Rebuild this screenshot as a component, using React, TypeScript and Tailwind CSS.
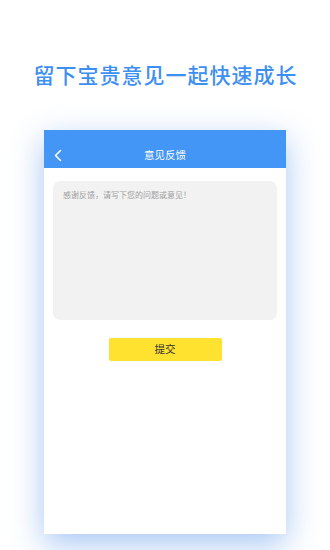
export default function App() {
  return (
    <div
      className="w-[330px] h-[550px] bg-white overflow-hidden flex flex-col items-center"
      style={{ fontFamily: '"Noto Sans CJK SC", "Noto Sans", sans-serif' }}
    >
      <div className="mt-[58px] h-[32px] flex items-center justify-center text-[21px] leading-none font-medium tracking-[1px] text-[#3d8ff2] pl-[1px]">
        留下宝贵意见一起快速成长
      </div>
      <div className="mt-[40px] w-[242px] h-[404px] bg-white flex flex-col shadow-[0_10px_30px_rgba(60,130,230,0.45)]">
        <div className="h-[38px] bg-[#4395f6] flex items-center relative pt-[12px]">
          <svg className="absolute left-[9px] top-[19px]" width="10" height="13" viewBox="0 0 10 13">
            <path d="M7.5 1.5 L2.5 6.5 L7.5 11.5" fill="none" stroke="white" strokeWidth="1.6" strokeLinecap="round" strokeLinejoin="round" />
          </svg>
          <div className="flex-1 text-center text-white text-[10.5px] leading-none">意见反馈</div>
        </div>
        <div className="mt-[13px] mx-[9px] h-[139px] rounded-[7px] bg-[#f2f2f2] px-[10px] pt-[10px]">
          <div className="text-[8px] leading-none text-[#9f9f9f]">感谢反馈，请写下您的问题或意见！</div>
        </div>
        <div className="mt-[18px] flex justify-center">
          <div className="w-[113px] h-[23px] rounded-[2px] bg-[#ffe22f] flex items-center justify-center text-[10.5px] leading-none text-[#333]">
            提交
          </div>
        </div>
      </div>
    </div>
  );
}
